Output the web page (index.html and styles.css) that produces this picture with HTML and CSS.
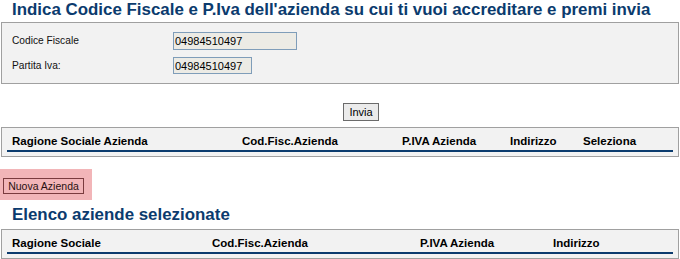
FILE: index.html
```html
<!DOCTYPE html>
<html lang="it">
<head>
<meta charset="utf-8">
<title>Accreditamento azienda</title>
<link rel="stylesheet" href="styles.css">
</head>
<body>
<h1 class="title">Indica Codice Fiscale e P.Iva dell'azienda su cui ti vuoi accreditare e premi invia</h1>
<div class="form-box">
  <label class="label" for="cf">Codice Fiscale</label>
  <div class="field"><input id="cf" class="input input-cf" type="text" value="04984510497" readonly></div>
  <label class="label" for="piva">Partita Iva:</label>
  <div class="field"><input id="piva" class="input input-piva" type="text" value="04984510497" readonly></div>
</div>
<div class="submit-row"><button class="btn-invia" type="button">Invia</button></div>
<div class="table-box">
  <div class="thead thead-search">
    <span>Ragione Sociale Azienda</span>
    <span>Cod.Fisc.Azienda</span>
    <span>P.IVA Azienda</span>
    <span>Indirizzo</span>
    <span>Seleziona</span>
  </div>
</div>
<div class="new-row"><button class="btn-nuova" type="button">Nuova Azienda</button></div>
<h2 class="title title-2">Elenco aziende selezionate</h2>
<div class="table-box">
  <div class="thead thead-selected">
    <span>Ragione Sociale</span>
    <span>Cod.Fisc.Azienda</span>
    <span>P.IVA Azienda</span>
    <span>Indirizzo</span>
  </div>
</div>
</body>
</html>
```
FILE: styles.css
```css
html, body {
  margin: 0;
  padding: 0;
  background: #ffffff;
}
body {
  font-family: "Liberation Sans", Arial, sans-serif;
  color: #000;
}
.title {
  margin: 0 0 2px 0;
  padding-left: 12px;
  font-size: 16.9px;
  line-height: 20px;
  font-weight: bold;
  color: #0b3b6e;
  white-space: nowrap;
}
.title-2 {
  margin: 5px 0 4px 0;
}
.form-box {
  margin: 0 1px;
  border: 1px solid #a0a0a0;
  background: #f2f2f2;
  padding: 9px 0 9px 10px;
  display: grid;
  grid-template-columns: 161px 1fr;
  grid-auto-rows: 17px;
  row-gap: 8px;
  align-items: center;
}
.label {
  font-size: 10.2px;
  color: #111;
  line-height: 14px;
}
.field {
  display: flex;
  align-items: flex-start;
  height: 17px;
}
.input {
  box-sizing: border-box;
  margin: 0;
  padding: 0 0 0 1px;
  border: 1px solid #7f9db9;
  background: #ecebe5;
  font-family: "Liberation Sans", Arial, sans-serif;
  font-size: 11px;
  color: #000;
  outline: none;
}
.input-cf {
  width: 124px;
  height: 18px;
}
.input-piva {
  width: 79px;
  height: 17px;
}
.submit-row {
  padding: 18px 0 0 343px;
  height: 18px;
}
.btn-invia {
  box-sizing: border-box;
  height: 18px;
  width: 36px;
  margin: 0;
  padding: 0;
  border: 1px solid #6b6b6b;
  background: #ebebeb;
  font-family: "Liberation Sans", Arial, sans-serif;
  font-size: 11px;
  line-height: 16px;
  color: #000;
}
.table-box {
  margin: 7px 1px 0 1px;
  border: 1px solid #a0a0a0;
  background: #f2f2f2;
  padding: 0 5px 4px 5px;
}
.thead {
  display: grid;
  padding: 6px 5px 2px 5px;
  border-bottom: 2px solid #0b3b6e;
  font-size: 11.5px;
  line-height: 14px;
  font-weight: bold;
  color: #000;
  white-space: nowrap;
}
.thead-search {
  grid-template-columns: 230px 160px 108px 73px 1fr;
}
.thead-selected {
  grid-template-columns: 200px 208px 133px 1fr;
}
.new-row {
  margin-top: 12px;
  width: 92px;
  box-sizing: border-box;
  padding: 9px 0 6px 3px;
  background: #f2b5b8;
}
.btn-nuova {
  box-sizing: border-box;
  height: 16px;
  width: 81px;
  margin: 0;
  padding: 0;
  border: 1px solid #7a3b3e;
  background: #f2b5b8;
  font-family: "Liberation Sans", Arial, sans-serif;
  font-size: 10.5px;
  line-height: 14px;
  color: #2a1010;
  display: block;
}
.title-2 + .table-box {
  margin-top: 0;
}
```
